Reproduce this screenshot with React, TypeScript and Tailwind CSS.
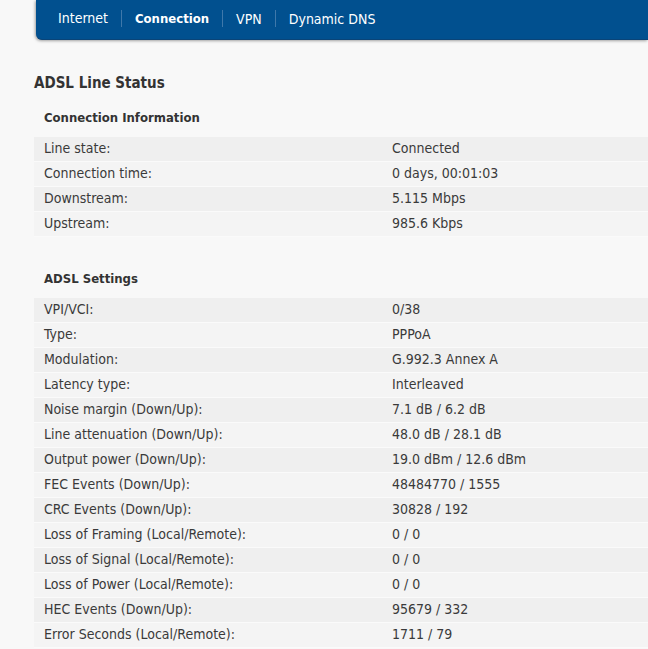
import { FunctionComponent } from "react";

type Row = [string, string];

const connectionRows: Row[] = [
  ["Line state:", "Connected"],
  ["Connection time:", "0 days, 00:01:03"],
  ["Downstream:", "5.115 Mbps"],
  ["Upstream:", "985.6 Kbps"],
];

const settingsRows: Row[] = [
  ["VPI/VCI:", "0/38"],
  ["Type:", "PPPoA"],
  ["Modulation:", "G.992.3 Annex A"],
  ["Latency type:", "Interleaved"],
  ["Noise margin (Down/Up):", "7.1 dB / 6.2 dB"],
  ["Line attenuation (Down/Up):", "48.0 dB / 28.1 dB"],
  ["Output power (Down/Up):", "19.0 dBm / 12.6 dBm"],
  ["FEC Events (Down/Up):", "48484770 / 1555"],
  ["CRC Events (Down/Up):", "30828 / 192"],
  ["Loss of Framing (Local/Remote):", "0 / 0"],
  ["Loss of Signal (Local/Remote):", "0 / 0"],
  ["Loss of Power (Local/Remote):", "0 / 0"],
  ["HEC Events (Down/Up):", "95679 / 332"],
  ["Error Seconds (Local/Remote):", "1711 / 79"],
];

const tabs = ["Internet", "Connection", "VPN", "Dynamic DNS"];

const Section: FunctionComponent<{ title: string; rows: Row[] }> = ({
  title,
  rows,
}) => (
  <section>
    <h3 className="h-[40px] pl-[10px] pt-[12px] text-[13px] font-bold leading-[18px] text-[#333]">
      {title}
    </h3>
    <div className="flex flex-col">
      {rows.map(([label, value], i) => (
        <div
          key={label}
          className={`flex h-[25px] items-center border-b border-[#fafafa] pb-[1px] text-[14px] text-[#3a3a3a] ${
            i % 2 === 0 ? "bg-[#efefef]" : "bg-[#f4f4f4]"
          }`}
        >
          <span className="w-[358px] pl-[10px]">{label}</span>
          <span>{value}</span>
        </div>
      ))}
    </div>
  </section>
);

export default function App() {
  return (
    <div
      className="min-h-[649px] w-full overflow-hidden bg-[#f8f8f8]"
      style={{ fontFamily: 'Tahoma, "DejaVu Sans Condensed", "DejaVu Sans", sans-serif' }}
    >
      <nav className="ml-[36px] flex h-[40px] items-start rounded-bl-[6px] border-b border-[#0a4478] bg-[#01508f] pl-[22px] pt-[10px] shadow-[-1px_1px_3px_rgba(0,0,0,0.35)]">
        {tabs.map((tab, i) => (
          <div key={tab} className="flex items-center">
            {i > 0 && <span className="mx-[13px] h-[17px] w-px bg-[#3f78aa]" />}
            <span
              className={`leading-[16px] text-white ${
                tab === "Connection" ? "text-[13px] font-bold" : "text-[14px]"
              }`}
            >
              {tab}
            </span>
          </div>
        ))}
      </nav>

      <main className="pl-[34px] pt-[33px]">
        <h2 className="text-[15px] font-bold leading-[20px] text-[#333]">
          ADSL Line Status
        </h2>
        <div className="mt-[4px] flex flex-col">
          <Section title="Connection Information" rows={connectionRows} />
          <div className="h-[21px]" />
          <Section title="ADSL Settings" rows={settingsRows} />
        </div>
      </main>
    </div>
  );
}
